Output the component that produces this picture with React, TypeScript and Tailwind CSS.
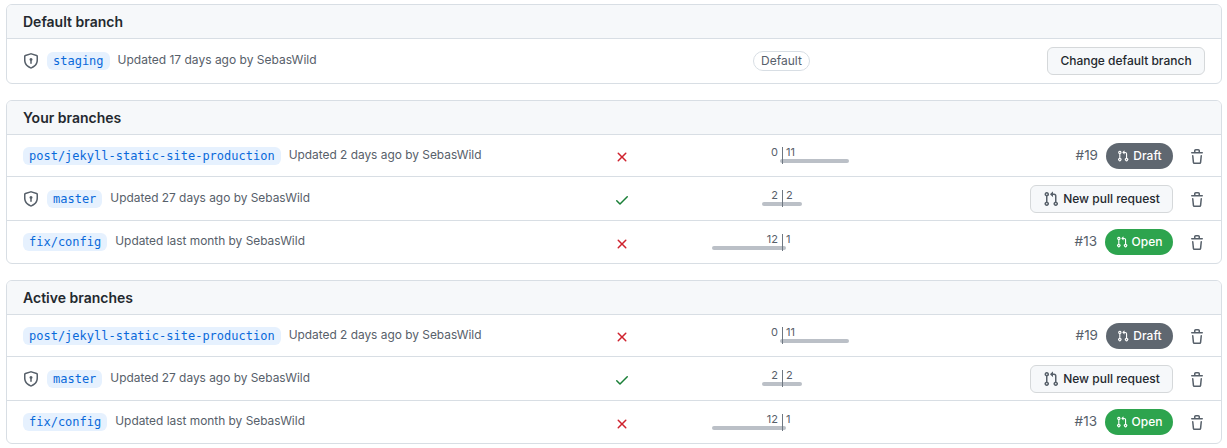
import React from "react";

const prPath =
  "M1.5 3.25a2.25 2.25 0 1 1 3 2.122v5.256a2.251 2.251 0 1 1-1.5 0V5.372A2.25 2.25 0 0 1 1.5 3.25Zm5.677-.177L9.573.677A.25.25 0 0 1 10 .854V2.5h1A2.5 2.5 0 0 1 13.5 5v5.628a2.251 2.251 0 1 1-1.5 0V5a1 1 0 0 0-1-1h-1v1.646a.25.25 0 0 1-.427.177L7.177 3.427a.25.25 0 0 1 0-.354ZM3.75 2.5a.75.75 0 1 0 0 1.5.75.75 0 0 0 0-1.5Zm0 9.5a.75.75 0 1 0 0 1.5.75.75 0 0 0 0-1.5Zm8.25.75a.75.75 0 1 0 1.5 0 .75.75 0 0 0-1.5 0Z";
const trashPath =
  "M11 1.75V3h2.25a.75.75 0 0 1 0 1.5H2.75a.75.75 0 0 1 0-1.5H5V1.75C5 .784 5.784 0 6.75 0h2.5C10.216 0 11 .784 11 1.75ZM4.496 6.675l.66 6.6a.25.25 0 0 0 .249.225h5.19a.25.25 0 0 0 .249-.225l.66-6.6a.75.75 0 0 1 1.492.149l-.66 6.6A1.748 1.748 0 0 1 10.595 15h-5.19a1.75 1.75 0 0 1-1.741-1.575l-.66-6.6a.75.75 0 1 1 1.492-.15ZM6.5 1.75V3h3V1.75a.25.25 0 0 0-.25-.25h-2.5a.25.25 0 0 0-.25.25Z";
const shieldPath =
  "m8.533.133 5.25 1.68A1.75 1.75 0 0 1 15 3.48V7c0 1.566-.32 3.182-1.303 4.682-.983 1.498-2.585 2.813-5.032 3.855a1.697 1.697 0 0 1-1.33 0c-2.447-1.042-4.049-2.357-5.032-3.855C1.32 10.182 1 8.566 1 7V3.48a1.75 1.75 0 0 1 1.217-1.667l5.25-1.68a1.748 1.748 0 0 1 1.066 0Zm-.61 1.429.001.001-5.25 1.68a.251.251 0 0 0-.174.237V7c0 1.36.275 2.666 1.057 3.859.784 1.194 2.121 2.342 4.366 3.298a.196.196 0 0 0 .154 0c2.245-.957 3.582-2.103 4.366-3.297C13.225 9.666 13.5 8.358 13.5 7V3.48a.25.25 0 0 0-.174-.238l-5.25-1.68a.25.25 0 0 0-.153 0ZM9.5 6.5c0 .536-.286 1.032-.75 1.3v2.45a.75.75 0 0 1-1.5 0V7.8A1.5 1.5 0 1 1 9.5 6.5Z";
const checkPath =
  "M13.78 4.22a.75.75 0 0 1 0 1.06l-7.25 7.25a.75.75 0 0 1-1.06 0L2.22 9.28a.751.751 0 0 1 .018-1.042.751.751 0 0 1 1.042-.018L6 10.94l6.72-6.72a.75.75 0 0 1 1.06 0Z";
const xPath =
  "M3.72 3.72a.75.75 0 0 1 1.06 0L8 6.94l3.22-3.22a.749.749 0 0 1 1.275.326.749.749 0 0 1-.215.734L9.06 8l3.22 3.22a.749.749 0 0 1-.326 1.275.749.749 0 0 1-.734-.215L8 9.06l-3.22 3.22a.751.751 0 0 1-1.042-.018.751.751 0 0 1-.018-1.042L6.94 8 3.72 4.78a.75.75 0 0 1 0-1.06Z";

function Icon({ d, className }: { d: string; className: string }) {
  return (
    <svg viewBox="0 0 16 16" fill="currentColor" className={className}>
      <path d={d} />
    </svg>
  );
}

interface Branch {
  name: string;
  updated: string;
  shield: boolean;
  passed: boolean;
  behind: number;
  ahead: number;
  leftBar: number;
  rightBar: number;
  pr: "draft" | "open" | "new";
  number?: string;
  rowClass: string;
}

const branches: Branch[] = [
  {
    name: "post/jekyll-static-site-production",
    updated: "Updated 2 days ago by SebasWild",
    shield: false,
    passed: false,
    behind: 0,
    ahead: 11,
    leftBar: 2,
    rightBar: 67,
    pr: "draft",
    number: "#19",
    rowClass: "h-[41px]",
  },
  {
    name: "master",
    updated: "Updated 27 days ago by SebasWild",
    shield: true,
    passed: true,
    behind: 2,
    ahead: 2,
    leftBar: 20,
    rightBar: 20,
    pr: "new",
    rowClass: "h-[45px] border-y border-[#d8dee4]",
  },
  {
    name: "fix/config",
    updated: "Updated last month by SebasWild",
    shield: false,
    passed: false,
    behind: 12,
    ahead: 1,
    leftBar: 70,
    rightBar: 4,
    pr: "open",
    number: "#13",
    rowClass: "h-[42px]",
  },
];

function BranchName({ name }: { name: string }) {
  return (
    <span className="inline-block h-[18px] rounded-md bg-[#e6f1fe] px-[6px] font-['DejaVu_Sans_Mono',monospace] text-[12px] leading-[18px] text-[#0969da]">
      {name}
    </span>
  );
}

function Diff({ b }: { b: Branch }) {
  return (
    <div className="flex justify-center">
      <div className="w-1/2 text-right">
        <div className="pr-[4px] text-[11px] leading-[11px] text-[#57606a]">{b.behind}</div>
        <div className="mb-[1px] mt-[1px] flex justify-end">
          <div className="h-[4px] rounded-l-full bg-[#bbc0c7]" style={{ width: b.leftBar }} />
        </div>
      </div>
      <div className="relative w-1/2">
        <div className="absolute left-0 top-0 z-10 h-[17px] w-px bg-[#6e7781]" />
        <div className="pl-[4px] text-[11px] leading-[11px] text-[#57606a]">{b.ahead}</div>
        <div className="mb-[1px] mt-[1px] flex">
          <div className="h-[4px] rounded-r-full bg-[#bbc0c7]" style={{ width: b.rightBar }} />
        </div>
      </div>
    </div>
  );
}

function PrCell({ b }: { b: Branch }) {
  if (b.pr === "new") {
    return (
      <button className="flex h-[28px] w-[143px] items-center justify-center gap-[4px] rounded-md border border-[#d5d8da] bg-[#f6f8fa] text-[12px] font-medium text-[#24292f]">
        <Icon d={prPath} className="h-[16px] w-[16px] text-[#57606a]" />
        New pull request
      </button>
    );
  }
  const draft = b.pr === "draft";
  return (
    <div className="flex items-center gap-[8px]">
      <span className="mt-[-1px] text-[13.5px] text-[#57606a]">{b.number}</span>
      <span
        className={`flex h-[26px] items-center justify-center gap-[4px] rounded-full text-[12px] font-medium text-white ${
          draft ? "w-[67px] bg-[#5f6770]" : "w-[68px] bg-[#2da44e]"
        }`}
      >
        <Icon d={prPath} className="h-[12px] w-[12px]" />
        {draft ? "Draft" : "Open"}
      </span>
    </div>
  );
}

function Row({ b }: { b: Branch }) {
  return (
    <div className={`grid grid-cols-[584px_30px_290px_1fr] items-center px-[16px] ${b.rowClass}`}>
      <div className="flex items-center">
        {b.shield && <Icon d={shieldPath} className="mr-[8px] h-[16px] w-[16px] text-[#57606a]" />}
        <BranchName name={b.name} />
        <span className="ml-[8px] mt-[-2px] text-[11.9px] text-[#57606a]">{b.updated}</span>
      </div>
      <div className="flex justify-center pt-[3px]">
        {b.passed ? (
          <Icon d={checkPath} className="h-[16px] w-[16px] text-[#1a7f37]" />
        ) : (
          <Icon d={xPath} className="h-[16px] w-[16px] text-[#cf222e]" />
        )}
      </div>
      <Diff b={b} />
      <div className="flex items-center justify-end">
        <PrCell b={b} />
        <Icon d={trashPath} className="ml-[16px] mt-[2px] h-[16px] w-[16px] text-[#57606a]" />
      </div>
    </div>
  );
}

function Box({ title, children }: { title: string; children: React.ReactNode }) {
  return (
    <section className="overflow-hidden rounded-md border border-[#d8dee4] bg-white">
      <h3 className="h-[34px] border-b border-[#d8dee4] bg-[#f6f8fa] pl-[16px] text-[14px] font-semibold leading-[33px] text-[#24292f]">
        {title}
      </h3>
      {children}
    </section>
  );
}

export default function App() {
  return (
    <div className="flex w-[1227px] flex-col gap-[16px] bg-white pl-[6px] pr-[5px] pt-[4px] font-['Inter',sans-serif]">
      <Box title="Default branch">
        <div className="grid h-[44px] grid-cols-[584px_30px_290px_1fr] items-center px-[16px]">
          <div className="flex items-center">
            <Icon d={shieldPath} className="mr-[8px] h-[16px] w-[16px] text-[#57606a]" />
            <BranchName name="staging" />
            <span className="ml-[8px] mt-[-2px] text-[12px] text-[#57606a]">Updated 17 days ago by SebasWild</span>
          </div>
          <div />
          <div className="flex justify-center">
            <span className="mr-[1px] w-[57px] rounded-full border border-[#d8dee4] text-center text-[12px] leading-[18px] text-[#57606a]">
              Default
            </span>
          </div>
          <div className="flex justify-end">
            <button className="h-[28px] w-[158px] rounded-md border border-[#d5d8da] bg-[#f6f8fa] text-[12px] font-medium text-[#24292f]">
              Change default branch
            </button>
          </div>
        </div>
      </Box>
      <Box title="Your branches">
        {branches.map((b) => (
          <Row key={b.name} b={b} />
        ))}
      </Box>
      <Box title="Active branches">
        {branches.map((b) => (
          <Row key={b.name} b={b} />
        ))}
      </Box>
    </div>
  );
}
